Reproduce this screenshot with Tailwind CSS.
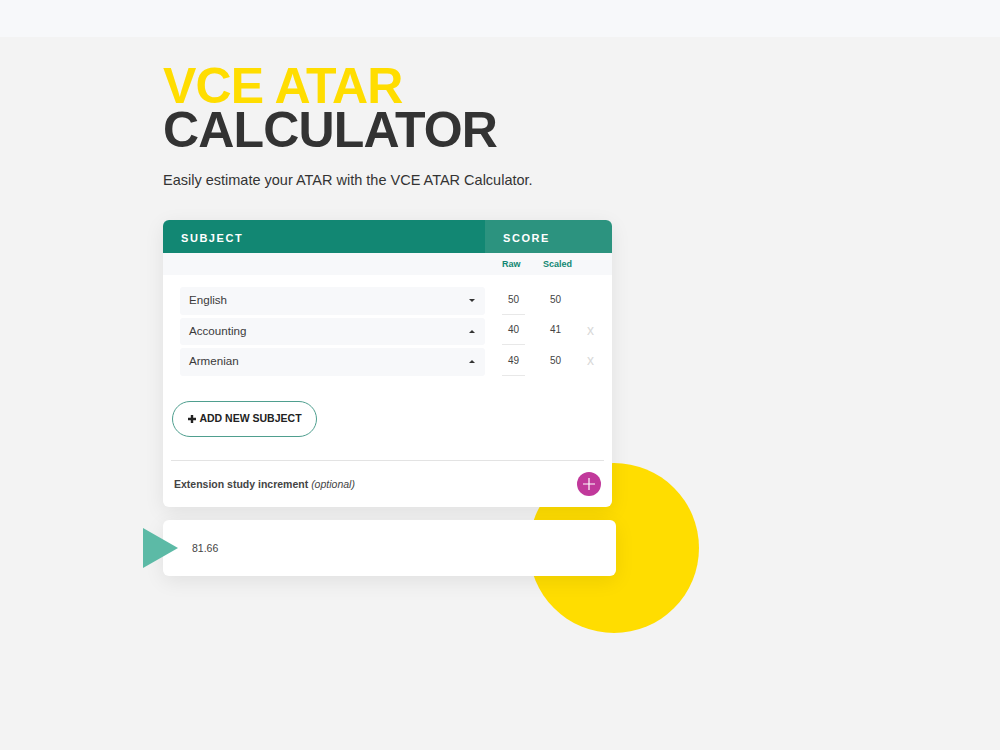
<!DOCTYPE html>
<html>
<head>
<meta charset="utf-8">
<script src="https://cdn.jsdelivr.net/npm/@tailwindcss/browser@4"></script>
</head>
<body class="bg-[#f3f3f3] font-['Liberation_Sans',Arial,sans-serif] text-[#333]">
<div class="h-[37px] bg-[#f7f8fa]"></div>
<main class="relative w-[1000px] h-[713px] overflow-hidden pl-[163px] pt-[27px]">
  <div class="absolute left-[529px] top-[426px] w-[170px] h-[170px] rounded-full bg-[#ffdd00]"></div>
  <h1 class="relative font-bold text-[50px] leading-[44px] tracking-[-0.85px]">
    <span class="block text-[#ffdd00]">VCE ATAR</span>
    <span class="block text-[#333]">CALCULATOR</span>
  </h1>
  <p class="relative mt-[18px] text-[14.5px] leading-[20px] text-[#333]">Easily estimate your ATAR with the VCE ATAR Calculator.</p>
  <section class="relative mt-[30px] w-[449px] h-[287px] bg-white rounded-[6px] shadow-[0_5px_20px_rgba(0,0,0,0.08)]">
    <div class="flex h-[33px] rounded-t-[6px] overflow-hidden text-white font-bold text-[11px] tracking-[1.55px] leading-[36px]">
      <div class="w-[322px] pl-[18px] bg-[#128773]">SUBJECT</div>
      <div class="flex-1 pl-[18px] bg-[#2c937f]">SCORE</div>
    </div>
    <div class="flex h-[22px] bg-[#f7f8fa] pl-[339px] text-[9px] font-bold leading-[22px] text-[#128773]">
      <div class="w-[41px]">Raw</div>
      <div>Scaled</div>
    </div>
    <div class="pl-[17px] pt-[12px] flex flex-col gap-[3px]">
      <div class="flex items-start h-[27.5px]">
        <div class="w-[305px] h-full bg-[#f7f8fa] rounded-[3px] flex items-center justify-between pl-[9px] pr-[10px] text-[11.6px] text-[#3a3a3a]"><span class="-translate-y-px">English</span><span class="w-0 h-0 border-x-[3px] border-x-transparent border-t-[3px] border-t-[#333]"></span></div>
        <div class="ml-[17px] w-[23px] h-full border-b border-[#e8e8e8] text-center text-[10px] leading-[25px] text-[#444]">50</div>
        <div class="ml-[19px] w-[23px] text-center text-[10px] leading-[25px] text-[#444]">50</div>
      </div>
      <div class="flex items-start h-[27.5px]">
        <div class="w-[305px] h-full bg-[#f7f8fa] rounded-[3px] flex items-center justify-between pl-[9px] pr-[10px] text-[11.6px] text-[#3a3a3a]"><span class="-translate-y-px">Accounting</span><span class="w-0 h-0 border-x-[3px] border-x-transparent border-b-[3px] border-b-[#333]"></span></div>
        <div class="ml-[17px] w-[23px] h-full border-b border-[#e8e8e8] text-center text-[10px] leading-[24px] text-[#444]">40</div>
        <div class="ml-[19px] w-[23px] text-center text-[10px] leading-[24px] text-[#444]">41</div>
        <div class="ml-[20px] text-[14px] leading-[24px] text-[#d9d9d9]">x</div>
      </div>
      <div class="flex items-start h-[27.5px]">
        <div class="w-[305px] h-full bg-[#f7f8fa] rounded-[3px] flex items-center justify-between pl-[9px] pr-[10px] text-[11.6px] text-[#3a3a3a]"><span class="-translate-y-px">Armenian</span><span class="w-0 h-0 border-x-[3px] border-x-transparent border-b-[3px] border-b-[#333]"></span></div>
        <div class="ml-[17px] w-[23px] h-full border-b border-[#e8e8e8] text-center text-[10px] leading-[25px] text-[#444]">49</div>
        <div class="ml-[19px] w-[23px] text-center text-[10px] leading-[25px] text-[#444]">50</div>
        <div class="ml-[20px] text-[14px] leading-[24px] text-[#d9d9d9]">x</div>
      </div>
    </div>
    <button class="ml-[9px] mt-[25px] flex items-center justify-center gap-[2px] w-[145px] h-[36px] rounded-full border border-[#4f9f8f] bg-white text-[#222] text-[10.5px] font-bold">
      <svg width="10" height="10" viewBox="0 0 10 10"><path d="M5 1v8M1 5h8" stroke="#222" stroke-width="2.4"/></svg>
      <span>ADD NEW SUBJECT</span>
    </button>
    <div class="mx-[8px] mt-[23px] h-[47px] border-t border-[#e3e3e3] flex items-center justify-between pl-[3px] pr-[3px]">
      <div class="text-[10.5px] text-[#444] translate-y-px"><b>Extension study increment</b> <i>(optional)</i></div>
      <div class="w-[24px] h-[24px] rounded-full bg-[#c1399b] flex items-center justify-center">
        <svg width="14" height="14" viewBox="0 0 14 14"><path d="M7 1v12M1 7h12" stroke="#fff" stroke-width="1.2"/></svg>
      </div>
    </div>
  </section>
  <section class="relative mt-[13px] w-[453px] h-[56px] bg-white rounded-[6px] shadow-[0_5px_20px_rgba(0,0,0,0.08)] flex items-center pl-[29px] text-[10.5px] text-[#444]">
    <span class="translate-y-px">81.66</span>
    <div class="absolute left-[-20px] top-[8px] w-0 h-0 border-y-[20px] border-y-transparent border-l-[35px] border-l-[#5cbaa6]"></div>
  </section>
</main>
</body>
</html>
